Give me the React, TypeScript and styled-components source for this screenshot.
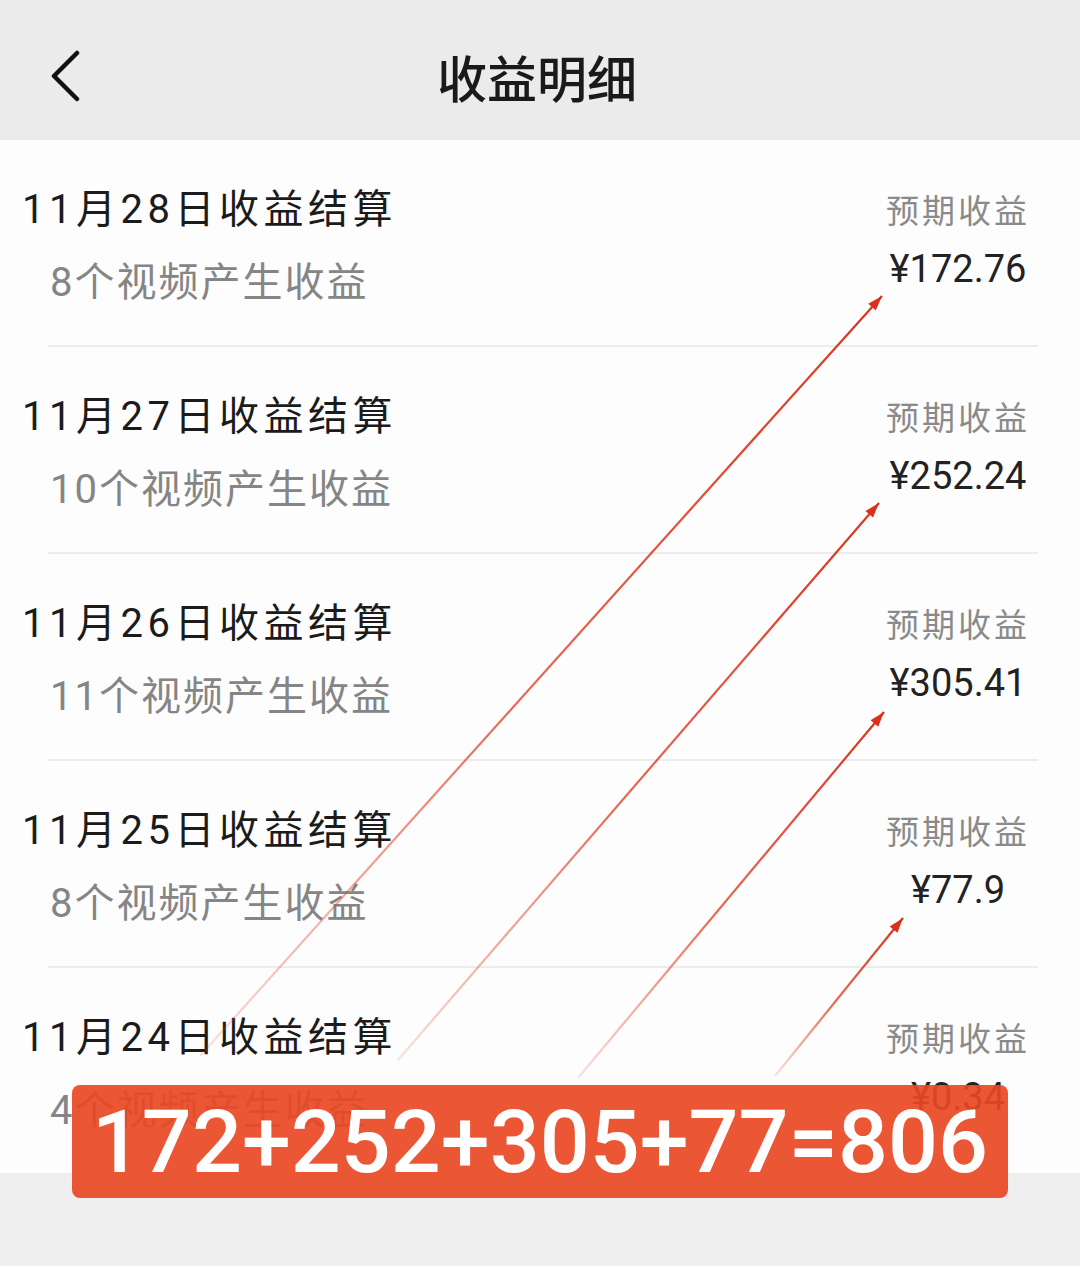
import { Fragment } from 'react';
import styled, { createGlobalStyle } from 'styled-components';

interface Settlement {
  date: string;
  count: number;
  amount: string;
}

// 每日结算数据
const settlements: Settlement[] = [
  { date: '11月28日', count: 8, amount: '172.76' },
  { date: '11月27日', count: 10, amount: '252.24' },
  { date: '11月26日', count: 11, amount: '305.41' },
  { date: '11月25日', count: 8, amount: '77.9' },
  { date: '11月24日', count: 4, amount: '0.34' },
];

// 标注箭头 (尾 -> 头)
const arrows = [
  { x1: 200, y1: 1056, x2: 882, y2: 296 },
  { x1: 398, y1: 1060, x2: 879, y2: 503 },
  { x1: 578, y1: 1078, x2: 884, y2: 712 },
  { x1: 775, y1: 1076, x2: 903, y2: 918 },
];

function headPoints(a: { x1: number; y1: number; x2: number; y2: number }) {
  const ang = Math.atan2(a.y2 - a.y1, a.x2 - a.x1);
  const len = 15;
  const half = 5;
  const bx = a.x2 - Math.cos(ang) * len;
  const by = a.y2 - Math.sin(ang) * len;
  const px = -Math.sin(ang) * half;
  const py = Math.cos(ang) * half;
  return `${a.x2},${a.y2} ${bx + px},${by + py} ${bx - px},${by - py}`;
}

function App() {
  return (
    <Page>
      <GlobalStyle />
      <Header>
        <BackButton>
          <svg width="34" height="52" viewBox="0 0 34 52">
            <polyline points="28,3 5,26 28,49" fill="none" stroke="#111" strokeWidth="4.5" strokeLinecap="round" strokeLinejoin="round" />
          </svg>
        </BackButton>
        <HeaderTitle>收益明细</HeaderTitle>
        <span />
      </Header>
      <List>
        {settlements.map((s, i) => (
          <Fragment key={s.date}>
            {i > 0 && <Divider />}
            <Row>
              <RowLeft>
                <RowTitle>{s.date}收益结算</RowTitle>
                <RowSub>{s.count}个视频产生收益</RowSub>
              </RowLeft>
              <RowRight>
                <Label>预期收益</Label>
                <Amount>¥{s.amount}</Amount>
              </RowRight>
            </Row>
          </Fragment>
        ))}
      </List>
      <Overlay width="1080" height="1266" viewBox="0 0 1080 1266">
        <defs>
          {arrows.map((a, i) => (
            <linearGradient key={i} id={`fade${i}`} gradientUnits="userSpaceOnUse" x1={a.x1} y1={a.y1} x2={a.x2} y2={a.y2}>
              <stop offset="0" stopColor="#e2452b" stopOpacity="0.15" />
              <stop offset="0.45" stopColor="#e2452b" stopOpacity="0.8" />
              <stop offset="1" stopColor="#d8321c" stopOpacity="1" />
            </linearGradient>
          ))}
        </defs>
        {arrows.map((a, i) => (
          <g key={i}>
            <line x1={a.x1} y1={a.y1} x2={a.x2} y2={a.y2} stroke={`url(#fade${i})`} strokeWidth="2.2" />
            <polygon points={headPoints(a)} fill="#d8321c" />
          </g>
        ))}
      </Overlay>
      <SumBanner>172+252+305+77=806</SumBanner>
    </Page>
  );
}

const GlobalStyle = createGlobalStyle`
  body {
    margin: 0;
    background: #efefef;
    font-family: Roboto, "Noto Sans CJK SC", sans-serif;
  }
`;

const Page = styled.div`
  position: relative;
  width: 1080px;
  height: 1266px;
  overflow: hidden;
  background: #efefef;
`;

const Header = styled.div`
  height: 140px;
  box-sizing: border-box;
  padding-top: 12px;
  background: #ebebeb;
  display: grid;
  grid-template-columns: 1fr auto 1fr;
  align-items: center;
`;

const BackButton = styled.div`
  padding-left: 49px;
  display: flex;
  align-items: center;
`;

const HeaderTitle = styled.div`
  font-family: "Noto Sans CJK SC", sans-serif;
  font-size: 50px;
  font-weight: 500;
  color: #1a1a1a;
  margin-left: -6px;
`;

const List = styled.div`
  background: #fdfdfd;
`;

const Divider = styled.div`
  height: 2px;
  margin: 0 42px 0 48px;
  background: #ececec;
`;

const Row = styled.div`
  height: 205px;
  box-sizing: border-box;
  display: flex;
  justify-content: space-between;
  padding: 0 37px 0 22px;
`;

const RowLeft = styled.div`
  padding-top: 45px;
`;

const RowTitle = styled.div`
  font-size: 40px;
  line-height: 50px;
  letter-spacing: 4.5px;
  color: #1b1b1b;
`;

const RowSub = styled.div`
  margin-top: 23px;
  padding-left: 28px;
  font-size: 40px;
  line-height: 50px;
  letter-spacing: 2px;
  color: #858585;
`;

const RowRight = styled.div`
  width: 170px;
  padding-top: 52px;
  text-align: center;
`;

const Label = styled.div`
  font-size: 33px;
  line-height: 40px;
  letter-spacing: 3px;
  color: #8a8a8a;
`;

const Amount = styled.div`
  margin-top: 15px;
  font-size: 38px;
  line-height: 44px;
  color: #222;
`;

const Overlay = styled.svg`
  position: absolute;
  top: 0;
  left: 0;
  pointer-events: none;
`;

const SumBanner = styled.div`
  position: absolute;
  left: 72px;
  top: 1085px;
  width: 936px;
  height: 113px;
  border-radius: 8px;
  background: rgba(233, 72, 36, 0.92);
  display: flex;
  align-items: center;
  justify-content: center;
  color: #fff;
  font-family: Roboto, sans-serif;
  font-size: 88px;
  font-weight: 500;
  letter-spacing: 0;
`;

export default App;
